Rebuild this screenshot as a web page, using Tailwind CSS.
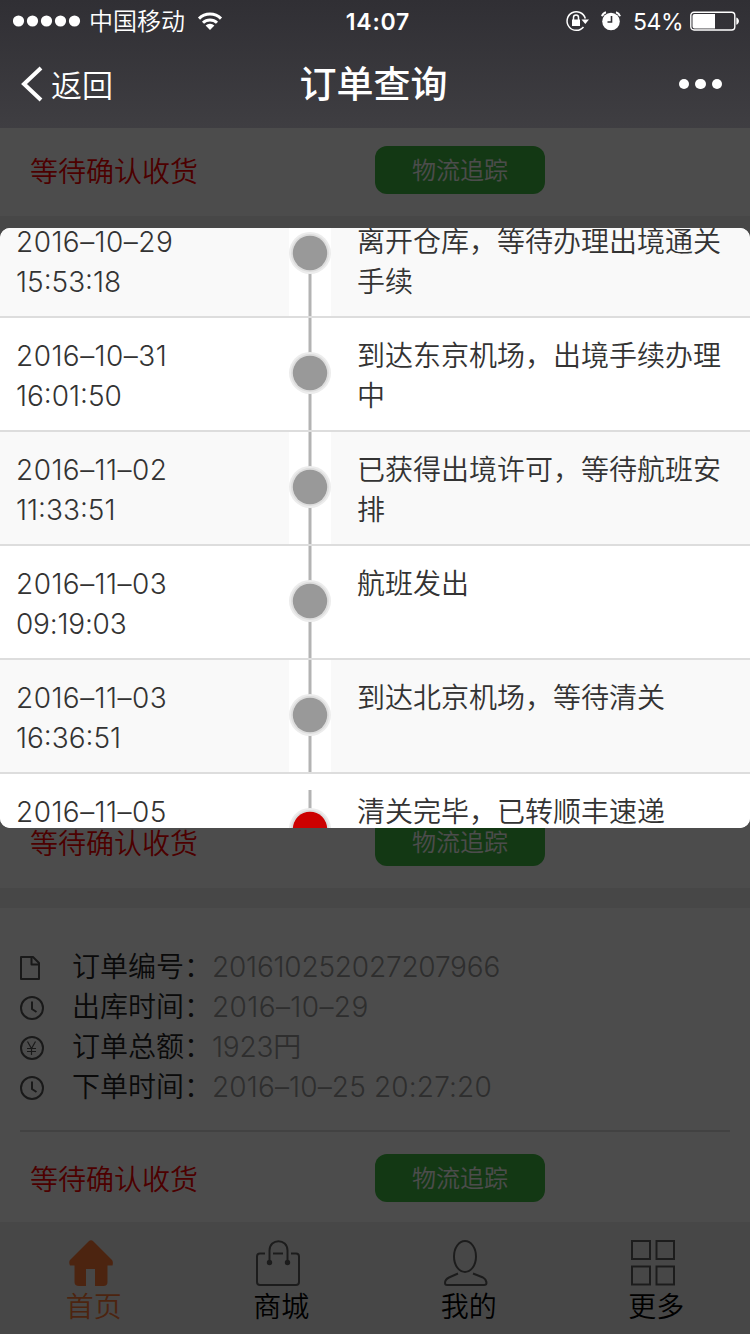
<!DOCTYPE html>
<html lang="zh-CN">
<head>
    <meta charset="UTF-8">
    <meta name="viewport" content="width=device-width, initial-scale=1.0">
    <title>订单查询</title>
    <script src="https://cdn.jsdelivr.net/npm/@tailwindcss/browser@4"></script>
</head>
<body class="bg-white font-['Inter','Noto_Sans_CJK_SC',sans-serif]">
    <div class="relative flex h-[1334px] w-[750px] flex-col overflow-hidden">

        <!-- Header -->
        <header class="h-32 shrink-0 bg-gradient-to-b from-[#302f34] to-[#3f3e42] text-white">
            <div class="grid h-10 grid-cols-3 items-center pl-[13px] pr-[11px]">
                <div class="flex items-center">
                    <svg class="h-3 w-[68px]" viewBox="0 0 68 12" fill="currentColor">
                        <circle cx="5.5" cy="6" r="5.6"/><circle cx="19.5" cy="6" r="5.6"/><circle cx="33.5" cy="6" r="5.6"/><circle cx="47.5" cy="6" r="5.6"/><circle cx="61.5" cy="6" r="5.6"/>
                    </svg>
                    <span class="ml-2 pt-[2px] text-2xl font-[350] leading-10">中国移动</span>
                    <svg class="ml-3 h-5 w-[26px]" viewBox="0 0 26 20" fill="none" stroke="currentColor" stroke-width="3">
                        <path d="M2 7.6a15.5 15.5 0 0 1 22 0"/>
                        <path d="M6 11.8a10 10 0 0 1 14 0"/>
                        <path d="M13 19l-4.4-4.4a6.2 6.2 0 0 1 8.8 0z" fill="currentColor" stroke="none"/>
                    </svg>
                </div>
                <div class="pl-[4px] pt-[1px] text-center text-[23px] font-semibold leading-10 tracking-[.8px]">14:07</div>
                <div class="flex items-center justify-end">
                    <svg class="h-6 w-6" viewBox="0 0 24 24" fill="none" stroke="currentColor" stroke-width="1.5">
                        <path d="M20.3 9.5A9.3 9.3 0 1 0 18.5 18"/>
                        <path d="M16.5 10.5h7.5l-3.7 4.5z" fill="currentColor" stroke="none"/>
                        <rect x="7" y="10.5" width="8" height="6.5" fill="currentColor" stroke="none"/>
                        <path d="M8.5 11V8.5a2.5 2.5 0 0 1 5 0V11"/>
                    </svg>
                    <svg class="ml-3 h-5 w-5" viewBox="0 0 20 20">
                        <circle cx="10" cy="10.5" r="8.8" fill="currentColor"/>
                        <path d="M1 5.2A6 6 0 0 1 5 1.2M15 1.2A6 6 0 0 1 19 5.2" fill="none" stroke="currentColor" stroke-width="2"/>
                        <path d="M10.5 5v6H6.5" fill="none" stroke="#313035" stroke-width="1.6"/>
                    </svg>
                    <span class="ml-[12px] pt-[1px] text-[23px] leading-10 tracking-[-.5px]">54%</span>
                    <svg class="-mr-[1px] ml-[7px] h-5 w-[50px]" viewBox="0 0 50 20">
                        <rect x=".8" y="1.2" width="44" height="17.8" rx="3.2" fill="none" stroke="currentColor" stroke-width="1.4"/>
                        <path d="M4.500 3H25v14.400H4.500a2 2 0 0 1-2-2V5a2 2 0 0 1 2-2z" fill="currentColor"/>
                        <path d="M46.300 6.500c3.500 1 3.500 6.200 0 7.200z" fill="currentColor"/>
                    </svg>
                </div>
            </div>
            <div class="grid h-[88px] grid-cols-3 items-center pl-[21px] pr-[28px]">
                <div class="flex items-center">
                    <svg class="h-9 w-[22px]" viewBox="0 0 22 36" fill="none" stroke="currentColor" stroke-width="4">
                        <path d="M20 2L3 18 20 34"/>
                    </svg>
                    <span class="ml-2 pt-[3px] text-[31px] font-[350] leading-10">返回</span>
                </div>
                <h1 class="whitespace-nowrap pl-[4px] pt-[2px] text-center text-[37px] font-medium">订单查询</h1>
                <div class="flex justify-end gap-[6px]">
                    <span class="size-[10.5px] rounded-full bg-white"></span>
                    <span class="size-[10.5px] rounded-full bg-white"></span>
                    <span class="size-[10.5px] rounded-full bg-white"></span>
                </div>
            </div>
        </header>

        <!-- Orders -->
        <main class="flex h-[1094px] shrink-0 flex-col gap-5 overflow-hidden bg-[#eee]">
            <section class="h-[88px] shrink-0 bg-white">
                <div class="-mt-1 grid h-[92px] grid-cols-2 items-center">
                    <span class="pl-[30px] pt-[3px] text-[28px] font-[350] text-[#f00]">等待确认收货</span>
                    <button class="h-12 w-[170px] rounded-xl bg-[#40bc43] pt-[2px] text-2xl font-[350] text-white">物流追踪</button>
                </div>
            </section>

            <section class="flex h-[316px] shrink-0 flex-col bg-white"></section>

            <section class="flex h-[316px] shrink-0 flex-col justify-end bg-white">
                <div class="grid h-[92px] grid-cols-2 items-center">
                    <span class="pl-[30px] pt-[3px] text-[28px] font-[350] text-[#f00]">等待确认收货</span>
                    <button class="h-12 w-[170px] rounded-xl bg-[#40bc43] pt-[2px] text-2xl font-[350] text-white">物流追踪</button>
                </div>
            </section>

            <section class="h-[316px] shrink-0 bg-white pt-[39px]">
                <ul class="px-5 text-[28px] font-[350] leading-10 text-[#999]">
                    <li class="flex h-10 items-center">
                        <svg class="mt-[1px] h-[26px] w-[26px]" viewBox="0 0 26 26" fill="none" stroke="#555" stroke-width="2">
                            <path d="M1 2h12l6 6V24H1zM11.500 2v7.500H19" stroke-linejoin="round"/>
                        </svg>
                        <span class="ml-[26px] w-[140px] text-[#222]">订单编号：</span>
                        <span class="tracking-[-.2px]">201610252027207966</span>
                    </li>
                    <li class="flex h-10 items-center">
                        <svg class="mt-[1px] h-[26px] w-[26px]" viewBox="0 0 26 26" fill="none" stroke="#555" stroke-width="2">
                            <circle cx="12" cy="13" r="11"/><path d="M12 6.500V14l4.500 3"/>
                        </svg>
                        <span class="ml-[26px] w-[140px] text-[#222]">出库时间：</span>
                        <span class="tracking-[.4px]">2016–10–29</span>
                    </li>
                    <li class="flex h-10 items-center">
                        <svg class="mt-[1px] h-[26px] w-[26px]" viewBox="0 0 26 26" fill="none" stroke="#555" stroke-width="2">
                            <circle cx="12" cy="13" r="11"/><path d="M7.500 6.500l4 7L15.500 6.500M11.500 13v7M7 13.500h9M7 16.500h9" stroke-width="1.2"/>
                        </svg>
                        <span class="ml-[26px] w-[140px] text-[#222]">订单总额：</span>
                        <span class="tracking-[-.2px]">1923円</span>
                    </li>
                    <li class="flex h-10 items-center">
                        <svg class="mt-[1px] h-[26px] w-[26px]" viewBox="0 0 26 26" fill="none" stroke="#555" stroke-width="2">
                            <circle cx="12" cy="13" r="11"/><path d="M12 6.500V14l4.500 3"/>
                        </svg>
                        <span class="ml-[26px] w-[140px] text-[#222]">下单时间：</span>
                        <span class="tracking-[.15px]">2016–10–25 20:27:20</span>
                    </li>
                </ul>
                <div class="mx-5 mt-[23px] h-[2px] bg-[#ddd]"></div>
                <div class="grid h-[92px] grid-cols-2 items-center">
                    <span class="pl-[30px] pt-[3px] text-[28px] font-[350] text-[#f00]">等待确认收货</span>
                    <button class="h-12 w-[170px] rounded-xl bg-[#40bc43] pt-[2px] text-2xl font-[350] text-white">物流追踪</button>
                </div>
            </section>
        </main>

        <!-- Tab bar -->
        <nav class="grid h-28 shrink-0 grid-cols-4 bg-[#eee] text-[28px] font-[350] text-black">
            <a class="flex flex-col items-center pt-[18px] text-[#ff7a38]">
                <svg class="mr-[6px] h-[46px] w-11" viewBox="0 0 44 46" fill="currentColor">
                    <path d="M19.500 1.500Q22 -1 24.500 1.500L43 20Q44.500 22 43.500 25.500H38.500V42Q38.500 46 34.500 46H26V29H17V46H10Q5.500 46 5.500 42V25.500H1Q-.5 22 1 20z"/>
                </svg>
                <span class="mt-[1px] leading-10">首页</span>
            </a>
            <a class="flex flex-col items-center pt-[18px]">
                <svg class="mr-[6px] h-[46px] w-11" viewBox="0 0 44 46" fill="none" stroke="#606060" stroke-width="2">
                    <path d="M9 13.500H4a3 3 0 0 0-3 3V42a3 3 0 0 0 3 3h36a3 3 0 0 0 3-3V16.500a3 3 0 0 0-3-3h-5M17 13.500h10M13.500 22V10.500C13.500 -2 31.500 -2 31.500 10.500V22"/>
                    <circle cx="13.500" cy="22.500" r="1.700" fill="#606060"/><circle cx="31.500" cy="22.500" r="1.700" fill="#606060"/>
                </svg>
                <span class="mt-[1px] leading-10">商城</span>
            </a>
            <a class="flex flex-col items-center pt-[18px]">
                <svg class="mr-[6px] h-[46px] w-11" viewBox="0 0 44 46" fill="none" stroke="#606060" stroke-width="2">
                    <ellipse cx="21" cy="16.500" rx="11" ry="15.500"/>
                    <path d="M14 33.500L5 37.500Q1 39.500 1 43Q1 45 3 45H40Q42.500 45 42.500 43Q42.500 39.500 39 37.500L29 33.500"/>
                </svg>
                <span class="mt-[1px] leading-10">我的</span>
            </a>
            <a class="flex flex-col items-center pt-[18px]">
                <svg class="mr-[6px] h-[46px] w-11" viewBox="0 0 44 46" fill="none" stroke="#606060" stroke-width="2">
                    <rect x="1" y="1" width="18" height="18"/><rect x="25.500" y="1" width="17.500" height="18"/>
                    <rect x="1" y="26.500" width="18" height="18"/><rect x="25.500" y="26.500" width="17.500" height="18"/>
                </svg>
                <span class="mt-[1px] leading-10">更多</span>
            </a>
        </nav>

        <!-- Tracking popup -->
        <div class="absolute inset-x-0 bottom-0 top-32 bg-black/70 pt-[100px]">
            <div class="h-[600px] overflow-hidden rounded-[10px] bg-white text-[28px] font-[350] leading-10 text-[#333]">
                <div class="-mt-6 grid h-[114px] grid-cols-[289px_42px_1fr] border-b-2 border-[#ddd] bg-[#f9f9f9]">
                    <div class="pl-4 pt-[18px]"><p class="tracking-[.45px]">2016–10–29</p><p>15:53:18</p></div>
                    <svg class="h-[112px] w-[42px] bg-white" viewBox="0 0 42 112">
                        <path d="M21 49V112" stroke="#b3b3b3" stroke-width="3"/><circle cx="21" cy="49" r="21" fill="#ececec"/><circle cx="21" cy="49" r="19" fill="#ddd"/><circle cx="21" cy="49" r="17.200" fill="#999"/>
                    </svg>
                    <div class="pl-[26px] pr-7 pt-[18px]">离开仓库，等待办理出境通关手续</div>
                </div>
                <div class="grid h-[114px] grid-cols-[289px_42px_1fr] border-b-2 border-[#ddd] bg-white">
                    <div class="pl-4 pt-[18px]"><p class="tracking-[.45px]">2016–10–31</p><p>16:01:50</p></div>
                    <svg class="h-[112px] w-[42px] bg-white" viewBox="0 0 42 112">
                        <path d="M21 0V112" stroke="#b3b3b3" stroke-width="3"/><circle cx="21" cy="55" r="21" fill="#ececec"/><circle cx="21" cy="55" r="19" fill="#ddd"/><circle cx="21" cy="55" r="17.200" fill="#999"/>
                    </svg>
                    <div class="pl-[26px] pr-7 pt-[18px]">到达东京机场，出境手续办理中</div>
                </div>
                <div class="grid h-[114px] grid-cols-[289px_42px_1fr] border-b-2 border-[#ddd] bg-[#f9f9f9]">
                    <div class="pl-4 pt-[18px]"><p class="tracking-[.45px]">2016–11–02</p><p>11:33:51</p></div>
                    <svg class="h-[112px] w-[42px] bg-white" viewBox="0 0 42 112">
                        <path d="M21 0V112" stroke="#b3b3b3" stroke-width="3"/><circle cx="21" cy="55" r="21" fill="#ececec"/><circle cx="21" cy="55" r="19" fill="#ddd"/><circle cx="21" cy="55" r="17.200" fill="#999"/>
                    </svg>
                    <div class="pl-[26px] pr-7 pt-[18px]">已获得出境许可，等待航班安排</div>
                </div>
                <div class="grid h-[114px] grid-cols-[289px_42px_1fr] border-b-2 border-[#ddd] bg-white">
                    <div class="pl-4 pt-[18px]"><p class="tracking-[.45px]">2016–11–03</p><p class="tracking-[-.2px]">09:19:03</p></div>
                    <svg class="h-[112px] w-[42px] bg-white" viewBox="0 0 42 112">
                        <path d="M21 0V112" stroke="#b3b3b3" stroke-width="3"/><circle cx="21" cy="55" r="21" fill="#ececec"/><circle cx="21" cy="55" r="19" fill="#ddd"/><circle cx="21" cy="55" r="17.200" fill="#999"/>
                    </svg>
                    <div class="pl-[26px] pr-7 pt-[18px]">航班发出</div>
                </div>
                <div class="grid h-[114px] grid-cols-[289px_42px_1fr] border-b-2 border-[#ddd] bg-[#f9f9f9]">
                    <div class="pl-4 pt-[18px]"><p class="tracking-[.45px]">2016–11–03</p><p>16:36:51</p></div>
                    <svg class="h-[112px] w-[42px] bg-white" viewBox="0 0 42 112">
                        <path d="M21 0V112" stroke="#b3b3b3" stroke-width="3"/><circle cx="21" cy="55" r="21" fill="#ececec"/><circle cx="21" cy="55" r="19" fill="#ddd"/><circle cx="21" cy="55" r="17.200" fill="#999"/>
                    </svg>
                    <div class="pl-[26px] pr-7 pt-[18px]">到达北京机场，等待清关</div>
                </div>
                <div class="grid h-[114px] grid-cols-[289px_42px_1fr] bg-white">
                    <div class="pl-4 pt-[18px] tracking-[.45px]">2016–11–05</div>
                    <svg class="h-[112px] w-[42px] bg-white" viewBox="0 0 42 112">
                        <path d="M21 16V55" stroke="#b3b3b3" stroke-width="3"/><circle cx="21" cy="55" r="21" fill="#ececec"/><circle cx="21" cy="55" r="19" fill="#ddd"/><circle cx="21" cy="55" r="17.200" fill="#c00"/>
                    </svg>
                    <div class="pl-[26px] pr-7 pt-[18px]">清关完毕，已转顺丰速递</div>
                </div>
            </div>
        </div>
    </div>
</body>
</html>
